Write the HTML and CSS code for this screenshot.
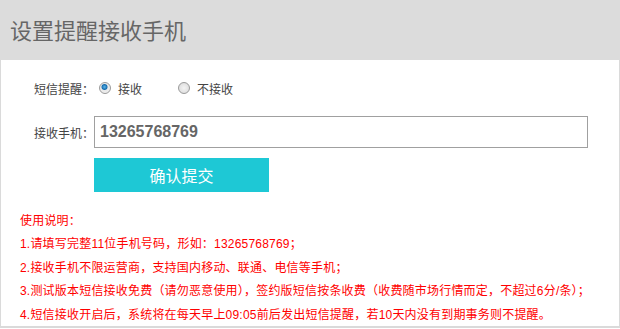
FILE: index.html
```html
<!DOCTYPE html>
<html lang="zh-CN">
<head>
  <meta charset="UTF-8">
  <title>设置提醒接收手机</title>
  <link rel="stylesheet" href="styles.css">
</head>
<body>
  <div class="panel">
    <!-- 标题 -->
    <div class="panel-head">设置提醒接收手机</div>

    <div class="panel-body">
      <form class="form">
        <div class="row">
          <span class="row-label">短信提醒：</span>
          <label class="choice"><input type="radio" name="notify" checked> 接收</label>
          <label class="choice choice-off"><input type="radio" name="notify"> 不接收</label>
        </div>

        <div class="row row-phone">
          <span class="row-label">接收手机：</span>
          <input class="phone" type="text" value="13265768769">
        </div>

        <button type="button" class="submit">确认提交</button>
      </form>

      <!-- 使用说明 -->
      <div class="notes">
        <p>使用说明：</p>
        <p>1.请填写完整11位手机号码，形如：13265768769；</p>
        <p>2.接收手机不限运营商，支持国内移动、联通、电信等手机；</p>
        <p>3.测试版本短信接收免费（请勿恶意使用），签约版短信按条收费（收费随市场行情而定，不超过6分/条）；</p>
        <p>4.短信接收开启后，系统将在每天早上09:05前后发出短信提醒，若10天内没有到期事务则不提醒。</p>
      </div>
    </div>
  </div>
</body>
</html>
```

FILE: styles.css
```css
* {
  margin: 0;
  padding: 0;
  box-sizing: border-box;
}

body {
  font-family: "Liberation Sans", "Noto Sans CJK SC", sans-serif;
  font-size: 12px;
  color: #444;
  background: #fff;
}

.panel {
  width: 620px;
  height: 329px;
}

.panel-head {
  height: 60px;
  padding: 19px 0 0 10px;
  background: #dcdcdc;
  color: #666;
  font-size: 22px;
  line-height: 26px;
}

.panel-body {
  height: 268px;
  border: 1px solid #dadada;
  border-top: none;
  border-bottom-width: 2px;
}

.form {
  padding: 16px 0 0 33px;
}

.row {
  display: flex;
  align-items: center;
  height: 24px;
}

.row-label {
  width: 60px;
}

.choice {
  display: flex;
  align-items: center;
  gap: 7px;
  margin-left: 5px;
}

.choice-off {
  margin-left: 36px;
}

.choice input {
  appearance: none;
  width: 12px;
  height: 12px;
  border: 1px solid #9a9a9a;
  border-radius: 50%;
  background: radial-gradient(circle, #f4f4f4 0, #d8d8d8 100%);
}

.choice input:checked {
  background: radial-gradient(circle at 45% 40%, #5ab6ea 0, #1a6fb0 2.5px, #e9e9e9 3.5px, #f4f4f4 100%);
}

.row-phone {
  height: 32px;
  margin-top: 16px;
}

.phone {
  width: 494px;
  height: 32px;
  padding: 0 5px;
  border: 1px solid #a0a0a0;
  outline: none;
  font-family: "Liberation Sans", sans-serif;
  font-size: 16px;
  font-weight: bold;
  color: #666;
}

.submit {
  display: block;
  width: 175px;
  height: 34px;
  margin: 10px 0 0 60px;
  border: none;
  background: #1ec8d5;
  color: #fff;
  font-family: "Liberation Sans", "Noto Sans CJK SC", sans-serif;
  font-size: 16px;
  cursor: pointer;
}

.notes {
  padding: 17.5px 0 0 19px;
  color: #f00;
  line-height: 23.5px;
  letter-spacing: 0.2px;
}
```
